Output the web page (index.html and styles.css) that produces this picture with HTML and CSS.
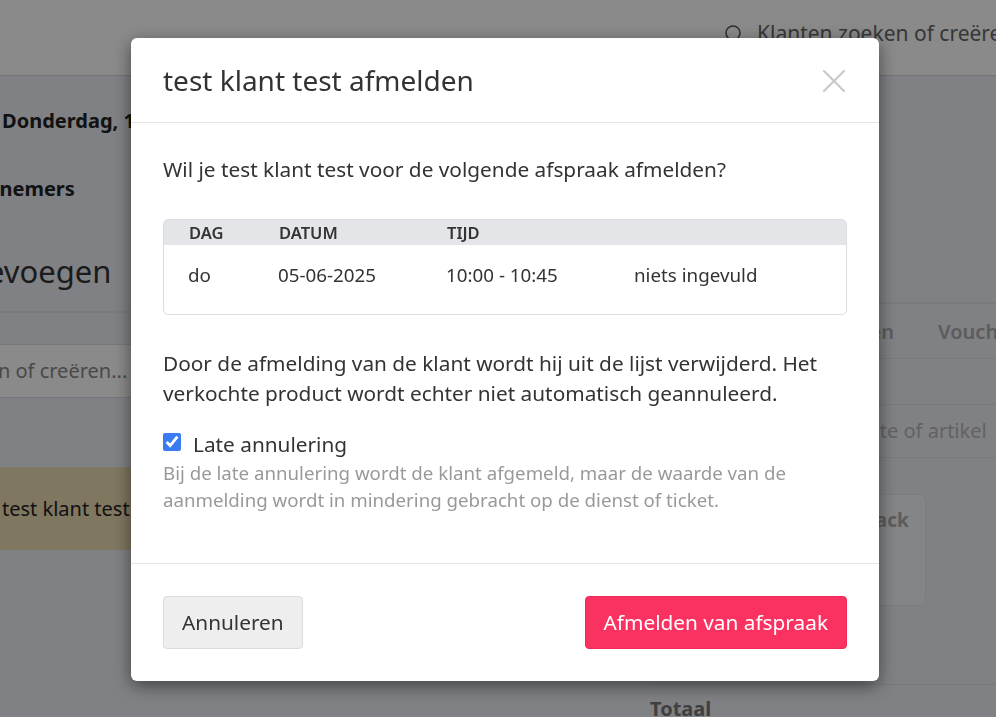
FILE: index.html
```html
<!DOCTYPE html>
<html lang="nl">

<head>
    <meta charset="UTF-8">
    <title>Afmelden</title>
    <link rel="stylesheet" href="styles.css">
</head>

<body>

    <div class="topbar">
        <div class="search">
            <svg width="18" height="18" viewBox="0 0 18 18"><circle cx="9" cy="9" r="7" fill="none" stroke="#555" stroke-width="1.5"/></svg>
            <span>Klanten zoeken of creëren...</span>
        </div>
    </div>

    <div class="page">
        <div class="left">
            <div class="date">Donderdag, 12 juni 2025</div>
            <div class="subtitle"><span class="cut cut-deel">Deelnemers</span></div>
            <div class="heading"><span class="cut cut-toe">Klant toevoegen</span></div>
            <div class="client-search"><span class="cut cut-zoek">Klanten zoeken of creëren...</span></div>
            <div class="client-row">test klant test</div>
        </div>

        <div class="right">
            <div class="tabs">
                <span>Producten</span>
                <span>Diensten</span>
                <span>Vouchers</span>
            </div>
            <div class="product-search">Zoek product, dienst, route of artikel</div>
            <div class="cards">
                <div class="card"><b>Snack</b><span>€ 0</span></div>
            </div>
            <div class="total">Totaal</div>
        </div>
    </div>

    <div class="backdrop">
        <div class="modal">
            <div class="modal-header">
                <h2>test klant test afmelden</h2>
                <button class="close">
                    <svg width="24" height="24" viewBox="0 0 24 24"><path d="M2 2 L22 22 M22 2 L2 22" stroke="#c9c9c9" stroke-width="2.2" stroke-linecap="round"/></svg>
                </button>
            </div>

            <div class="modal-body">
                <p class="question">Wil je test klant test voor de volgende afspraak afmelden?</p>

                <div class="appointments">
                    <div class="row head">
                        <span>Dag</span>
                        <span>Datum</span>
                        <span>Tijd</span>
                        <span></span>
                    </div>
                    <div class="row">
                        <span>do</span>
                        <span>05-06-2025</span>
                        <span>10:00 - 10:45</span>
                        <span>niets ingevuld</span>
                    </div>
                </div>

                <p class="info">Door de afmelding van de klant wordt hij uit de lijst verwijderd. Het verkochte product wordt echter niet automatisch geannuleerd.</p>

                <label class="check">
                    <input type="checkbox" checked>
                    <span>Late annulering</span>
                </label>
                <p class="help">Bij de late annulering wordt de klant afgemeld, maar de waarde van de aanmelding wordt in mindering gebracht op de dienst of ticket.</p>
            </div>

            <div class="modal-footer">
                <button class="btn btn-default">Annuleren</button>
                <button class="btn btn-danger">Afmelden van afspraak</button>
            </div>
        </div>
    </div>

</body>

</html>
```

FILE: styles.css
```css
body {
    margin: 0;
    font-family: 'Noto Sans', 'Open Sans', sans-serif;
    color: #333;
    background: #eceff5;
    overflow: hidden;
    height: 717px;
}

/* page behind the modal */

.topbar {
    height: 75px;
    background: #fff;
    border-bottom: 1px solid #d8d8d8;
    display: flex;
    justify-content: flex-end;
}

.search {
    display: flex;
    align-items: center;
    gap: 15px;
    width: 272px;
    height: 66px;
    font-size: 21px;
    color: #666;
    white-space: nowrap;
    overflow: hidden;
}

.search svg {
    flex-shrink: 0;
}

.page {
    display: grid;
    grid-template-columns: 640px 1fr;
}

.left {
    overflow: hidden;
    font-size: 20px;
}

.cut {
    display: block;
    white-space: nowrap;
}

.date {
    margin: 32px 0 0 2px;
    line-height: 26px;
    font-weight: 700;
    color: #222;
    white-space: nowrap;
}

.subtitle {
    margin-top: 42px;
    line-height: 26px;
    font-weight: 700;
    color: #222;
}

.cut-deel {
    margin-left: -45px;
}

.heading {
    margin-top: 49px;
    font-size: 31px;
    line-height: 40px;
    padding-bottom: 20px;
    border-bottom: 2px solid #e2e4e8;
}

.cut-toe {
    margin-left: -126px;
}

.client-search {
    margin-top: 31px;
    height: 52px;
    line-height: 52px;
    background: #fff;
    border-top: 1px solid #d9dce1;
    border-bottom: 1px solid #d9dce1;
    color: #888;
}

.cut-zoek {
    margin-left: -134px;
}

.client-row {
    margin-top: 69px;
    height: 83px;
    line-height: 83px;
    padding-left: 2px;
    background: #ecdcb3;
    color: #222;
}

.right {
    padding-left: 10px;
    font-size: 20px;
}

.tabs {
    margin-top: 226px;
    height: 54px;
    display: flex;
    align-items: center;
    gap: 44px;
    padding-left: 12px;
    border-top: 2px solid #dfe2e6;
    border-bottom: 1px solid #dfe2e6;
    font-weight: 600;
    color: #aaa;
    white-space: nowrap;
}

.product-search {
    margin-top: 45px;
    height: 52px;
    line-height: 52px;
    text-indent: -6px;
    border-top: 1px solid #dfe2e6;
    border-bottom: 1px solid #dfe2e6;
    color: #b5b5b5;
    white-space: nowrap;
    overflow: hidden;
}

.cards {
    display: flex;
    margin-top: 36px;
    padding-left: 186px;
}

.card {
    width: 90px;
    height: 112px;
    display: flex;
    flex-direction: column;
    justify-content: space-between;
    padding: 12px 16px 10px;
    box-sizing: border-box;
    background: #f4f5f8;
    border: 1px solid #e6e8ec;
    border-radius: 8px;
    font-size: 19px;
    color: #aaa;
}

.total {
    margin-top: 78px;
    padding-top: 10px;
    border-top: 1px solid #dfe2e6;
    font-weight: 700;
    color: #777;
}

/* modal */

.backdrop {
    position: fixed;
    inset: 0;
    background: rgba(0, 0, 0, 0.46);
}

.modal {
    width: 748px;
    margin: 38px 0 0 131px;
    background: #fff;
    border-radius: 6px;
    box-shadow: 0 5px 18px rgba(0, 0, 0, 0.5);
}

.modal-header {
    display: flex;
    justify-content: space-between;
    align-items: center;
    height: 84px;
    padding: 0 32px;
    border-bottom: 1px solid #e5e5e5;
}

.modal-header h2 {
    margin: 0;
    font-size: 28px;
    line-height: 34px;
    font-weight: 400;
    color: #333;
}

.close {
    border: 0;
    background: none;
    padding: 0;
    width: 24px;
    height: 24px;
    margin: 2px 1px 0 0;
    cursor: pointer;
}

.modal-body {
    padding: 33px 32px 50px;
    font-size: 20.8px;
}

.question {
    margin: 0 0 36px;
    line-height: 27px;
}

.appointments {
    border: 1px solid #dcdcdc;
    border-radius: 5px;
    overflow: hidden;
}

.row {
    display: grid;
    grid-template-columns: 90px 168px 188px 1fr;
    padding: 17px 0 25px 24px;
    line-height: 27px;
    font-size: 18.8px;
}

.row.head {
    padding: 0 0 0 25px;
    line-height: 25px;
    background: #e4e5e9;
    font-size: 16.5px;
    font-weight: 600;
    text-transform: uppercase;
}

.info {
    margin: 33px 0 0;
    line-height: 30px;
}

.check {
    display: flex;
    align-items: center;
    gap: 12px;
    margin-top: 21px;
    height: 30px;
    font-size: 20.8px;
}

.check input {
    width: 18px;
    height: 18px;
    margin: -4px 0 0;
    accent-color: #3a7bf2;
}

.help {
    margin: 0;
    font-size: 18.7px;
    line-height: 27px;
    color: #999;
}

.modal-footer {
    display: flex;
    justify-content: space-between;
    padding: 32px;
    border-top: 1px solid #e5e5e5;
}

.btn {
    height: 53px;
    font-family: inherit;
    font-size: 20.8px;
    line-height: 27px;
    padding: 0 18px;
    border-radius: 4px;
    cursor: pointer;
}

.btn-default {
    background: #eee;
    border: 1px solid #dcdcdc;
    color: #333;
}

.btn-danger {
    background: #f93261;
    border: 1px solid #f5265a;
    color: #fff;
}
```
